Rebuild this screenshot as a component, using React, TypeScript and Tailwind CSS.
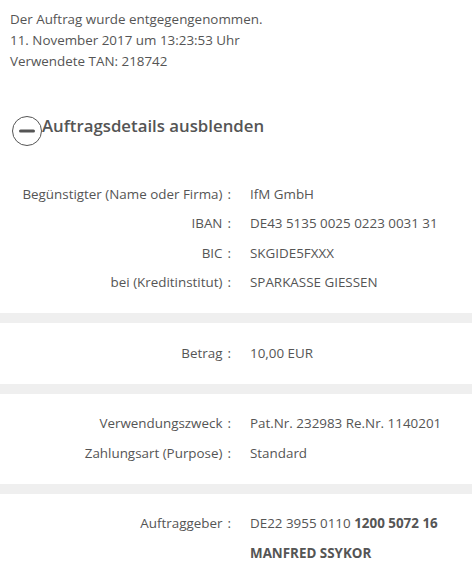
import { ReactNode } from "react";

type Row = { label: string; value: ReactNode };

const sections: Row[][] = [
    [
        { label: "Begünstigter (Name oder Firma)", value: "IfM GmbH" },
        { label: "IBAN", value: "DE43 5135 0025 0223 0031 31" },
        { label: "BIC", value: "SKGIDE5FXXX" },
        { label: "bei (Kreditinstitut)", value: "SPARKASSE GIESSEN" },
    ],
    [{ label: "Betrag", value: "10,00 EUR" }],
    [
        { label: "Verwendungszweck", value: "Pat.Nr. 232983 Re.Nr. 1140201" },
        { label: "Zahlungsart (Purpose)", value: "Standard" },
    ],
    [
        {
            label: "Auftraggeber",
            value: (
                <>
                    DE22 3955 0110 <span className="font-bold">1200 5072 16</span>
                </>
            ),
        },
        { label: "", value: <span className="font-bold">MANFRED SSYKOR</span> },
    ],
];

function DetailRow({ label, value }: Row) {
    return (
        <div className="grid grid-cols-[231px_1fr] gap-x-[19px] h-[29.5px] items-center">
            <div className="text-right whitespace-nowrap">
                {label && (
                    <>
                        {label}
                        <span className="ml-[5px]">:</span>
                    </>
                )}
            </div>
            <div className="whitespace-nowrap">{value}</div>
        </div>
    );
}

export default function App() {
    return (
        <div
            className="w-[472px] h-[579px] overflow-hidden bg-white text-[#555555] text-[13.4px]"
            style={{ fontFamily: '"Open Sans", "Noto Sans", sans-serif' }}
        >
            {/* status text */}
            <div className="px-[10px] pt-[9px] leading-[21px]">
                <p>Der Auftrag wurde entgegengenommen.</p>
                <p>11. November 2017 um 13:23:53 Uhr</p>
                <p>Verwendete TAN: 218742</p>
            </div>

            {/* toggle heading */}
            <div className="flex items-center pl-[12px] mt-[42px] h-[34px]">
                <span className="relative w-[30px] h-[30px] rounded-full border-[1.5px] border-[#555555] shrink-0">
                    <span className="absolute left-[6px] right-[6px] top-1/2 -translate-y-1/2 h-[3px] rounded-sm bg-[#555555]" />
                </span>
                <h2 className="text-[16.8px] font-semibold -mt-[11px]">Auftragsdetails ausblenden</h2>
            </div>

            {sections.map((rows, i) => (
                <div key={i}>
                    {i > 0 && <div className="h-[10px] bg-[#efefef]" />}
                    <div className={i === 0 ? "pt-[31px] pb-[16px]" : "pt-[15px] pb-[16px]"}>
                        {rows.map((row, k) => (
                            <DetailRow key={k} {...row} />
                        ))}
                    </div>
                </div>
            ))}
        </div>
    );
}
